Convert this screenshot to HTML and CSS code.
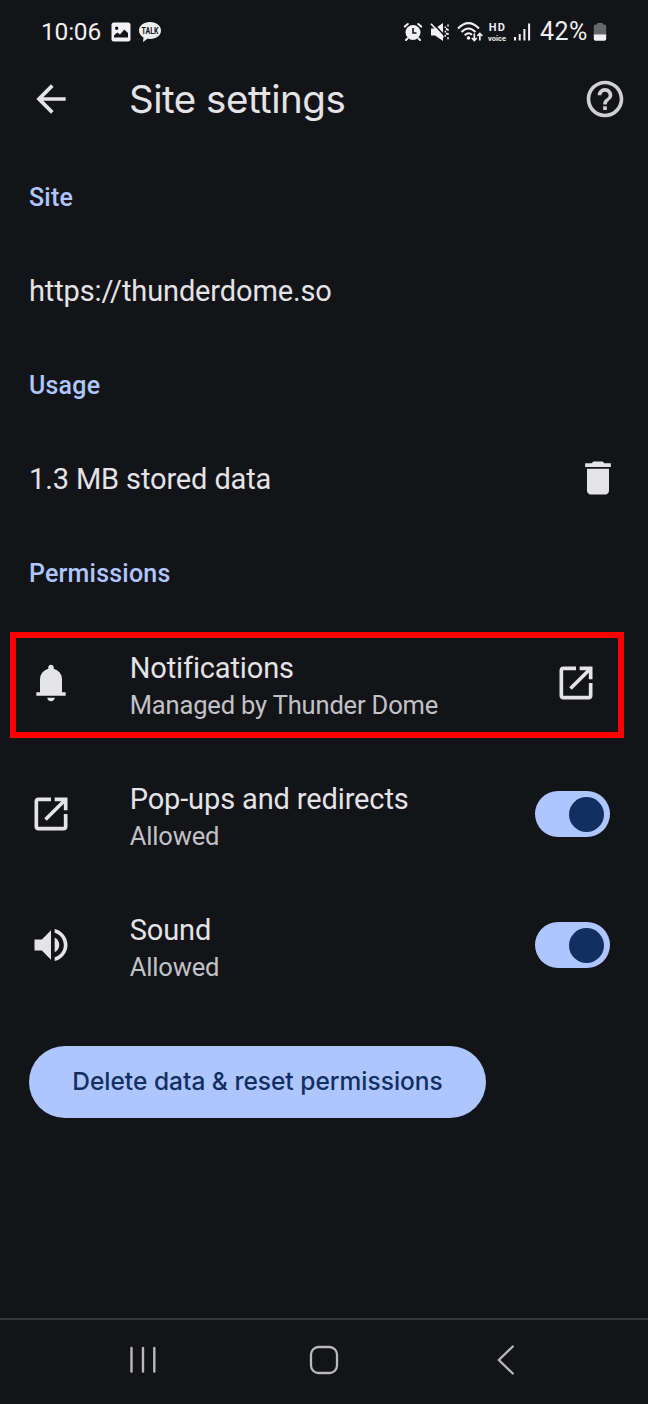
FILE: index.html
```html
<!DOCTYPE html>
<html lang="en">
<head>
<meta charset="utf-8">
<title>Site settings</title>
<link rel="stylesheet" href="styles.css">
</head>
<body>
<div class="screen">
  <div class="status">
    <span class="clock">10:06</span>
    <svg class="st-photo" width="20" height="20" viewBox="0 0 20 20"><path fill="#f1f1f3" fill-rule="evenodd" d="M3 .5H17Q19.500 .5 19.500 3V17Q19.500 19.500 17 19.500H3Q.5 19.500 .5 17V3Q.5 .5 3 .5ZM5.700 4.500A1.700 1.700 0 1 0 5.700 7.900A1.700 1.700 0 1 0 5.700 4.500ZM3 15.500H17V11L13.300 7.500L9 12.500L6.300 10.500L3 13.500Z"/></svg>
    <svg class="st-talk" width="24" height="22" viewBox="0 0 24 22"><path fill="#f1f1f3" d="M12 1C5.500 1 1 4.700 1 9.500C1 12.500 2.800 15 5.500 16.500L5 21L9.500 17.800C17.500 18.700 23 15 23 9.500C23 4.700 18.500 1 12 1Z"/><text class="talk-text" x="12" y="12.500" text-anchor="middle" textLength="17" lengthAdjust="spacingAndGlyphs">TALK</text></svg>
    <span class="grow"></span>
    <svg class="st-alarm" width="20" height="20" viewBox="0 0 20 20"><g fill="none" stroke="#f1f1f3" stroke-linecap="round"><path stroke-width="2" d="M1.800 4.600L4.800 2M18.200 4.600L15.200 2M4.500 16.500L3 18M15.500 16.500L17 18"/></g><circle cx="10" cy="10.500" r="7.500" fill="#f1f1f3"/><path d="M10 6V11H13.500" fill="none" stroke="#131418" stroke-width="1.600"/></svg>
    <svg class="st-mute" width="20" height="20" viewBox="0 0 20 20"><path fill="#f1f1f3" d="M1 6.500H5L13 1V19L5 13.500H1Z"/><path d="M2.200 .3L14.800 14" stroke="#131418" stroke-width="1.600"/><path d="M1 1.800L13.500 15.500" stroke="#f1f1f3" stroke-width="1.700"/><path d="M15.300 4.500V6M15.300 8.700V10.500M15.300 13V14.700M18 2.500V4.500M18 7V8.700M18 11V12.800M18 15.300V17.200M16.700 6V8.300M16.700 10.700V12.700" fill="none" stroke="#f1f1f3" stroke-width="1.500"/></svg>
    <svg class="st-wifi" width="26" height="22" viewBox="0 0 26 22"><g fill="none" stroke="#f1f1f3" stroke-width="2.100"><path d="M1 7.500Q11.500 -3.200 22 7.500M4.500 11Q11.500 4 18.500 11M7.700 14.200Q11.500 10.500 15 13.800"/><path stroke-width="1.700" d="M17.300 12.500V19M14.800 17L17.300 19.500L19.800 17M22.800 19.500V12.500M20.300 15L22.800 12.500L25.300 15"/></g><circle cx="11.500" cy="17" r="1.800" fill="#f1f1f3"/></svg>
    <span class="hd"><b>HD</b><i>voice</i></span>
    <svg class="st-signal" width="18" height="20" viewBox="0 0 18 20"><path stroke="#f1f1f3" stroke-width="2" d="M2 15V18.500M6.700 12V18.500M11.400 7V18.500M16.100 1.500V18.500"/></svg>
    <span class="pct">42%</span>
    <svg class="st-battery" width="14" height="20" viewBox="0 0 14 20"><path fill="#66676b" d="M.8 4Q.8 2.500 2.500 2.500H4V2Q4 1 5 1H9Q10 1 10 2V2.500H11.500Q13.200 2.500 13.200 4V13H.8Z"/><path fill="#f1f1f3" d="M0.800 12.500H13.200V17Q13.200 18.700 11.500 18.700H2.500Q0.800 18.700 .8 17Z"/></svg>
  </div>

  <header class="toolbar">
    <svg class="back" width="44" height="44" viewBox="0 0 24 24"><path fill="#e4e3e7" d="M20 11H7.830l5.590-5.590L12 4l-8 8 8 8 1.410-1.410L7.830 13H20v-2z"/></svg>
    <h1 class="title">Site settings</h1>
    <svg class="help" width="44" height="44" viewBox="0 0 24 24"><path fill="#d0d0d3" d="M11 18h2v-2h-2v2zm1-16C6.480 2 2 6.480 2 12s4.480 10 10 10 10-4.480 10-10S17.520 2 12 2zm0 18c-4.410 0-8-3.590-8-8s3.590-8 8-8 8 3.590 8 8-3.590 8-8 8zm0-14c-2.210 0-4 1.790-4 4h2c0-1.100.9-2 2-2s2 .9 2 2c0 2-3 1.750-3 5h2c0-2.250 3-2.500 3-5 0-2.210-1.790-4-4-4z"/></svg>
  </header>

  <main class="content">
    <h2 class="heading">Site</h2>
    <div class="line"><span class="label">https://thunderdome.so</span></div>
    <h2 class="heading">Usage</h2>
    <div class="line"><span class="label">1.3 MB stored data</span>
      <svg class="trash" width="44" height="44" viewBox="0 0 24 24"><path fill="#e4e3e7" d="M6 19c0 1.100.9 2 2 2h8c1.100 0 2-.9 2-2V7H6v12zM19 4h-3.500l-1-1h-5l-1 1H5v2h14V4z"/></svg></div>
    <h2 class="heading h-perm">Permissions</h2>

    <section class="row highlighted">
      <svg class="lead" width="44" height="44" viewBox="0 0 24 24"><path fill="#e4e3e7" d="M4 19v-2h2v-7q0-2.080 1.250-3.690T10.500 4.200v-.7q0-.62.440-1.060T12 2t1.060.44T13.500 3.500v.7q2 .5 3.250 2.110T18 10v7h2v2H4zm8 3q-.82 0-1.410-.59T10 20h4q0 .83-.59 1.410T12 22z"/></svg>
      <div class="texts"><div class="label">Notifications</div><div class="sub">Managed by Thunder Dome</div></div>
      <svg class="launch" width="44" height="44" viewBox="0 0 24 24"><path fill="#e4e3e7" d="M5 21q-.82 0-1.410-.59T3 19V5q0-.82.590-1.410T5 3h7v2H5v14h14v-7h2v7q0 .82-.59 1.410T19 21H5zm4.700-5.300l-1.400-1.400L17.600 5H14V3h7v7h-2V6.400l-9.300 9.300z"/></svg>
    </section>
    <section class="row">
      <svg class="lead" width="44" height="44" viewBox="0 0 24 24"><path fill="#e4e3e7" d="M5 21q-.82 0-1.410-.59T3 19V5q0-.82.590-1.410T5 3h7v2H5v14h14v-7h2v7q0 .82-.59 1.410T19 21H5zm4.700-5.300l-1.400-1.400L17.600 5H14V3h7v7h-2V6.400l-9.300 9.300z"/></svg>
      <div class="texts"><div class="label">Pop-ups and redirects</div><div class="sub">Allowed</div></div>
      <div class="switch"><div class="thumb"></div></div>
    </section>
    <section class="row">
      <svg class="lead" width="44" height="44" viewBox="0 0 24 24"><path fill="#e4e3e7" d="M3 9v6h4l5 5V4L7 9H3zm13.500 3c0-1.770-1.020-3.290-2.500-4.030v8.050c1.480-.73 2.500-2.250 2.500-4.020zM14 3.230v2.060c2.890.86 5 3.540 5 6.710s-2.110 5.850-5 6.710v2.060c4.010-.91 7-4.490 7-8.770s-2.990-7.860-7-8.770z"/></svg>
      <div class="texts"><div class="label">Sound</div><div class="sub">Allowed</div></div>
      <div class="switch"><div class="thumb"></div></div>
    </section>
    <button class="reset"><span>Delete data &amp; reset permissions</span></button>
  </main>

  <nav class="navbar">
    <svg width="30" height="30" viewBox="0 0 30 30"><path stroke="#b9b9bd" stroke-width="2.400" stroke-linecap="round" d="M3.500 3V26.500M15 3V26.500M26.300 3V26.500"/></svg>
    <svg width="30" height="30" viewBox="0 0 30 30"><rect x="2" y="2" width="26" height="26" rx="7.500" fill="none" stroke="#b9b9bd" stroke-width="2.300"/></svg>
    <svg width="30" height="30" viewBox="0 0 30 30"><path fill="none" stroke="#b9b9bd" stroke-width="2.300" stroke-linecap="round" stroke-linejoin="round" d="M22.800 1.500L8.800 15L22.800 28.500"/></svg>
  </nav>
</div>
</body>
</html>
```
FILE: styles.css
```css
* { box-sizing: border-box; }
body { margin: 0; background: #131418; font-family: Roboto, "Liberation Sans", sans-serif; }
h1, h2 { margin: 0; }
svg { display: block; flex: none; }
.screen { width: 648px; height: 1404px; display: flex; flex-direction: column; background: #131418; overflow: hidden; }
.grow { flex: 1; }

.status { height: 64px; flex: none; display: flex; align-items: center; padding: 0 41px 0 41px; color: #eeeef0; }
.clock { width: 70px; font-size: 24.5px; letter-spacing: -0.2px; line-height: 30px; white-space: nowrap; }
.st-talk { margin-left: 7px; }
.talk-text { font: 700 8.500px Roboto, sans-serif; fill: #131418; }
.st-mute { margin-left: 7px; }
.st-wifi { margin-left: 7px; }
.hd { width: 22px; margin-left: 3px; display: flex; flex-direction: column; align-items: center; }
.hd b { font-size: 11px; line-height: 13px; letter-spacing: 1.4px; margin-right: -1px; }
.hd i { font-size: 7.5px; font-style: normal; font-weight: 700; line-height: 9px; }
.st-signal { margin-left: 5px; }
.pct { margin-left: 9px; width: 53px; font-size: 25px; letter-spacing: 0.5px; line-height: 30px; white-space: nowrap; }
.st-battery { margin-left: 0; }

.toolbar { height: 70px; flex: none; display: flex; align-items: center; padding: 0 21px 0 28.5px; }
.title { margin: 0 0 0 56.5px; flex: 1; font: 400 38.5px/44px Inter, Roboto, sans-serif; letter-spacing: -0.48px; color: #e4e3e7; white-space: nowrap; }

.content { padding-top: 16px; flex: 1; }
.heading { height: 94px; padding-left: 29px; font-size: 25px; font-weight: 500; line-height: 95px; letter-spacing: 0.2px; color: #adc6ff; }
.h-perm { height: 92px; }
.line { height: 94px; display: flex; align-items: center; justify-content: space-between; padding: 0 28.500px 0 29px; }
.label { font-size: 29px; line-height: 36px; letter-spacing: -0.13px; color: #e4e3e7; white-space: nowrap; }
.sub { font-size: 25.5px; line-height: 38px; letter-spacing: -0.16px; color: #c1c2c6; white-space: nowrap; }
.trash { margin: -2px 0 0; }

.row { height: 131px; display: flex; align-items: center; padding: 0 38px 1px 28.5px; position: relative; }
.texts { flex: 1; margin-left: 57.2px; padding-top: 7px; }
.highlighted { padding-right: 50px; }
.highlighted::after { content: ""; box-sizing: border-box; position: absolute; left: 10px; top: 14px; width: 614px; height: 106px; border: 6px solid #ff0000; }
.switch { width: 75px; height: 46px; border-radius: 23px; background: #adc6ff; display: flex; align-items: center; justify-content: flex-end; padding-right: 6px; }
.thumb { width: 35px; height: 35px; border-radius: 50%; background: #122f61; }

.reset { display: flex; align-items: center; justify-content: center; width: 457px; height: 72px; margin: 35px 0 0 29px; border: 0; border-radius: 36px; background: #adc6ff; color: #122f61; font: 500 24.5px Inter, Roboto, sans-serif; white-space: nowrap; padding: 0 0 2px; }

.navbar { height: 86px; flex: none; border-top: 2px solid #36373b; display: flex; justify-content: space-between; padding: 25px 128px 0 128px; }
```
